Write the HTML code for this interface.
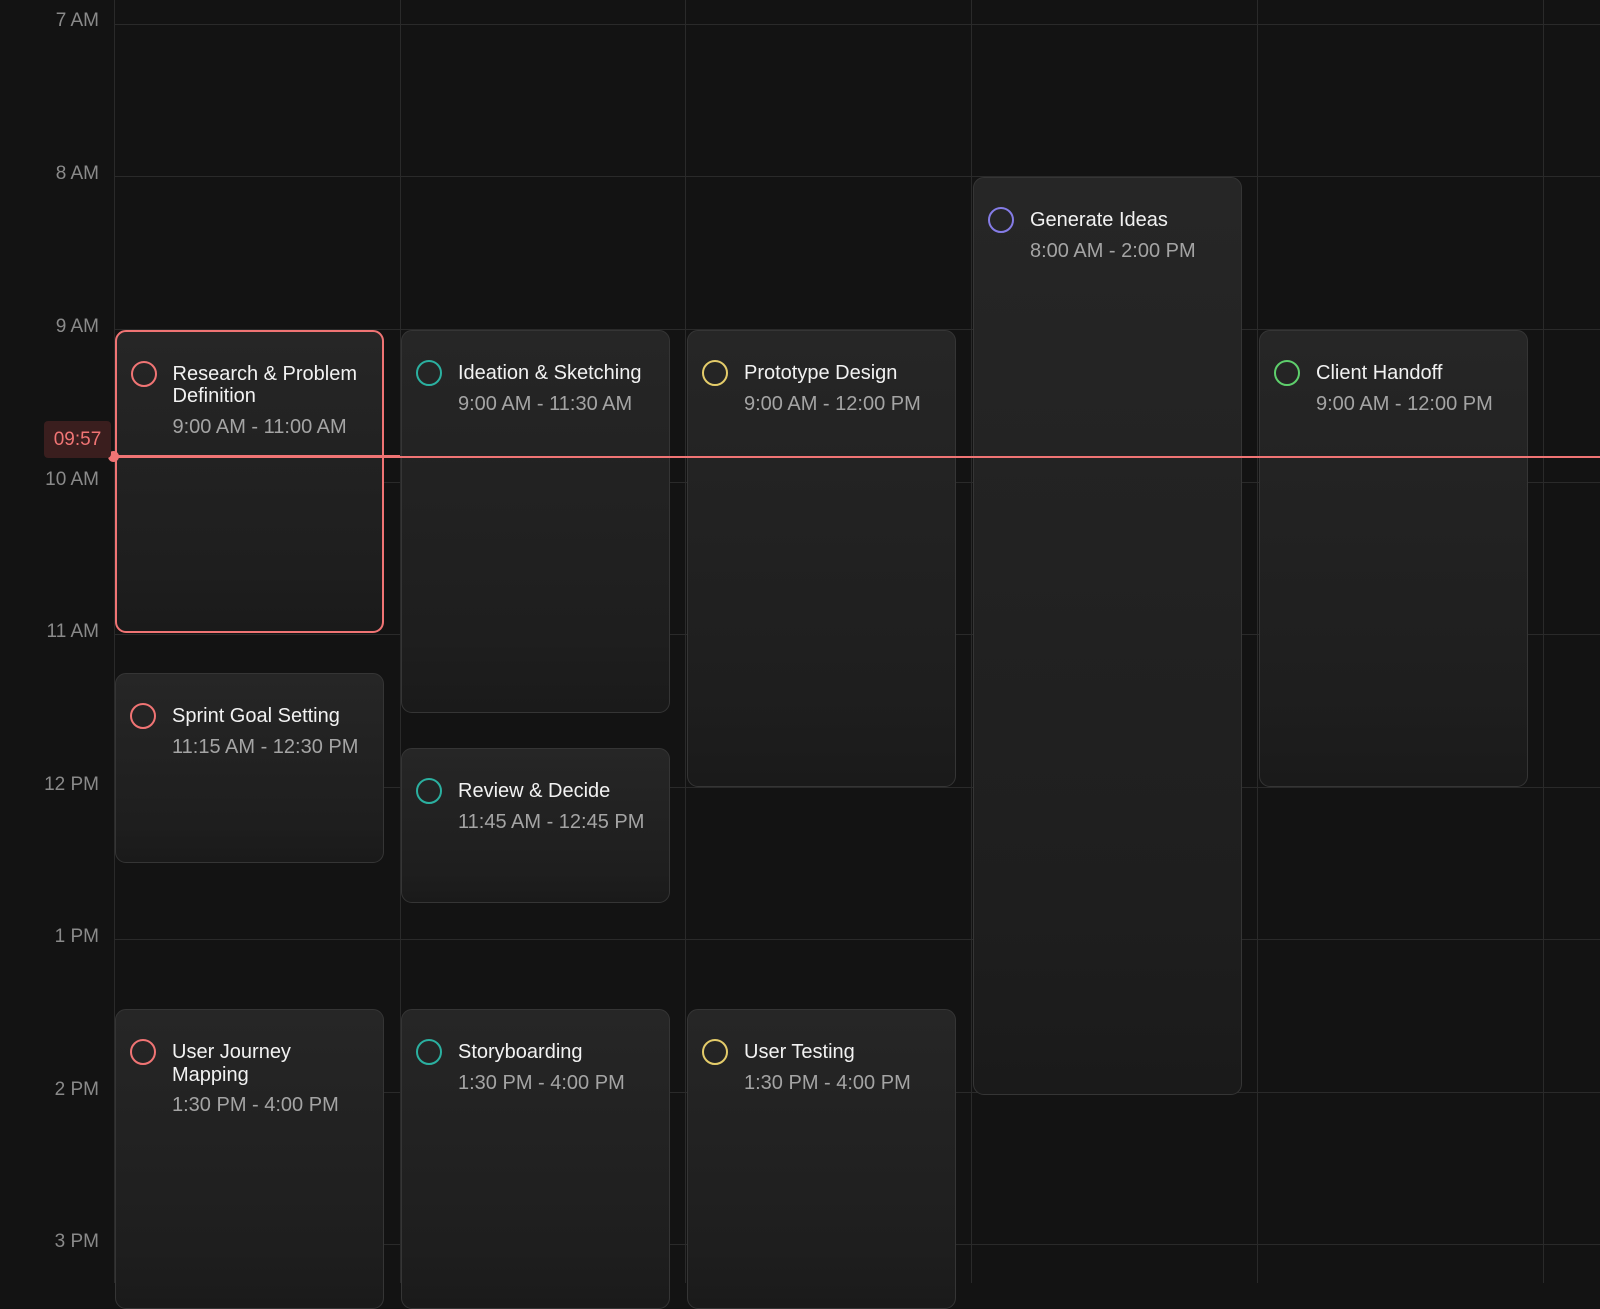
<!DOCTYPE html>
<html><head><meta charset="utf-8"><style>
*{margin:0;padding:0;box-sizing:border-box}
body{width:1600px;height:1283px;background:#131313;overflow:hidden;position:relative;font-family:"Liberation Sans",sans-serif}
.h{position:absolute;left:114px;right:0;height:1px;background:#2a2a2a}
.v{position:absolute;top:0;bottom:0;width:1px;background:#2a2a2a}
.lb{position:absolute;right:1501px;font-size:19px;color:#8a8a8a;text-align:right;white-space:nowrap}
.ev{position:absolute;width:269px;border:1.5px solid #353535;border-radius:11px;background:linear-gradient(#262626,#1e1e1e 80%,#1a1a1a);overflow:hidden}
.ev .c{position:absolute;left:14px;top:29px;width:26px;height:26px;border-radius:50%;border:2px solid}
.ev .t{position:absolute;left:56px;top:31px;width:196px;font-size:20px;line-height:22.5px;color:#f2f2f2}
.ev .t div{color:#a4a4a4;margin-top:8px;white-space:nowrap}
</style></head><body>
<div class="h" style="top:24px"></div>
<div class="h" style="top:176px"></div>
<div class="h" style="top:329px"></div>
<div class="h" style="top:482px"></div>
<div class="h" style="top:634px"></div>
<div class="h" style="top:787px"></div>
<div class="h" style="top:939px"></div>
<div class="h" style="top:1092px"></div>
<div class="h" style="top:1244px"></div>
<div class="v" style="left:114px"></div>
<div class="v" style="left:400px"></div>
<div class="v" style="left:685px"></div>
<div class="v" style="left:971px"></div>
<div class="v" style="left:1257px"></div>
<div class="v" style="left:1543px"></div>

<div class="lb" style="top:10px">7 AM</div>
<div class="lb" style="top:163px">8 AM</div>
<div class="lb" style="top:316px">9 AM</div>
<div class="lb" style="top:469px">10 AM</div>
<div class="lb" style="top:621px">11 AM</div>
<div class="lb" style="top:774px">12 PM</div>
<div class="lb" style="top:926px">1 PM</div>
<div class="lb" style="top:1079px">2 PM</div>
<div class="lb" style="top:1231px">3 PM</div>

<div class="ev" style="left:115px;top:330px;height:303px;border-color:#f07474;border-width:2px"><div class="c" style="border-color:#f07474;left:13.5px;top:28.5px"></div><div class="t" style="left:55.5px;top:30.5px">Research &amp; Problem Definition<div>9:00 AM - 11:00 AM</div></div></div>
<div class="ev" style="left:115px;top:673px;height:190px"><div class="c" style="border-color:#f07474"></div><div class="t">Sprint Goal Setting<div>11:15 AM - 12:30 PM</div></div></div>
<div class="ev" style="left:115px;top:1009px;height:300px"><div class="c" style="border-color:#f07474"></div><div class="t">User Journey Mapping<div>1:30 PM - 4:00 PM</div></div></div>

<div class="ev" style="left:401px;top:330px;height:383px"><div class="c" style="border-color:#2bb0a0"></div><div class="t">Ideation &amp; Sketching<div>9:00 AM - 11:30 AM</div></div></div>
<div class="ev" style="left:401px;top:748px;height:155px"><div class="c" style="border-color:#2bb0a0"></div><div class="t">Review &amp; Decide<div>11:45 AM - 12:45 PM</div></div></div>
<div class="ev" style="left:401px;top:1009px;height:300px"><div class="c" style="border-color:#2bb0a0"></div><div class="t">Storyboarding<div>1:30 PM - 4:00 PM</div></div></div>

<div class="ev" style="left:687px;top:330px;height:457px"><div class="c" style="border-color:#e4cc6a"></div><div class="t">Prototype Design<div>9:00 AM - 12:00 PM</div></div></div>
<div class="ev" style="left:687px;top:1009px;height:300px"><div class="c" style="border-color:#e4cc6a"></div><div class="t">User Testing<div>1:30 PM - 4:00 PM</div></div></div>

<div class="ev" style="left:973px;top:177px;height:918px"><div class="c" style="border-color:#857ce6"></div><div class="t">Generate Ideas<div>8:00 AM - 2:00 PM</div></div></div>

<div class="ev" style="left:1259px;top:330px;height:457px"><div class="c" style="border-color:#5ecf6c"></div><div class="t">Client Handoff<div>9:00 AM - 12:00 PM</div></div></div>

<div style="position:absolute;left:114px;top:455px;width:286px;height:3px;background:#f07474"></div>
<div style="position:absolute;left:400px;top:456px;right:0;height:1.5px;background:#f07474"></div>
<div style="position:absolute;left:108px;top:451px;width:11px;height:11px;border-radius:50%;background:#f07474"></div>
<div style="position:absolute;left:44px;top:421px;width:67px;height:37px;border-radius:4px;background:#3a1e1e;color:#f07474;font-size:19px;line-height:37px;text-align:center">09:57</div>
</body></html>
